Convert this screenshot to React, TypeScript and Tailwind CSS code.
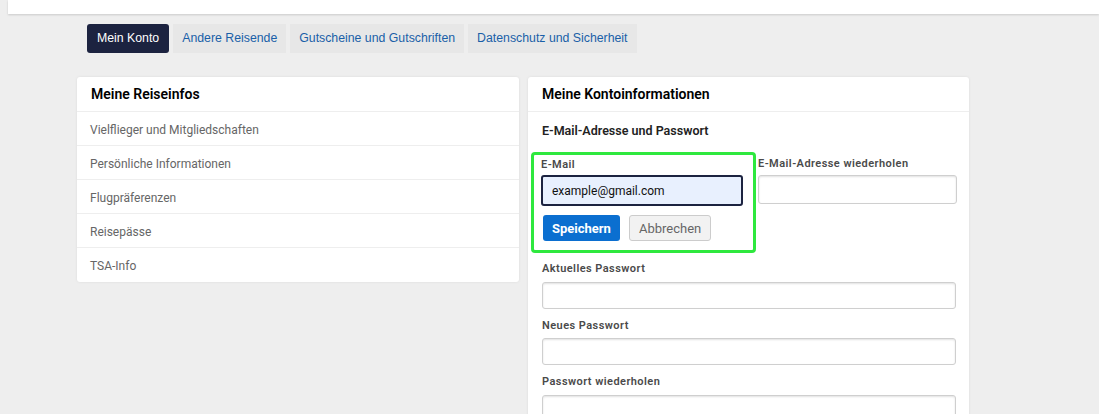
import { useState } from 'react'

const tabs = ['Mein Konto', 'Andere Reisende', 'Gutscheine und Gutschriften', 'Datenschutz und Sicherheit']

const travelLinks = [
    'Vielflieger und Mitgliedschaften',
    'Persönliche Informationen',
    'Flugpräferenzen',
    'Reisepässe',
    'TSA-Info',
]

const labelClass = 'block text-[11px] font-semibold tracking-[0.04em] text-[#4a4a4a]'

const inputClass =
    'block h-[27px] w-full rounded-[3px] border border-[#cfcfcf] bg-white shadow-[inset_0_1px_2px_rgba(0,0,0,0.12)] outline-none'

const Field = ({ label }: { label: string }) => (
    <div>
        <label className={labelClass + ' mb-[4px]'}>{label}</label>
        <input type="password" className={inputClass} />
    </div>
)

const App = () => {
    const [email, setEmail] = useState('example@gmail.com')

    return (
        <div className="min-h-[414px] bg-[#eeeeee] font-['Roboto',sans-serif]">
            <div className="ml-2 h-[14px] bg-white shadow-[0_1px_2px_rgba(0,0,0,0.15)]" />

            <div className="ml-[77px] w-[892px]">
                <nav className="ml-[10px] mt-[10px] flex gap-[4px] font-['Liberation_Sans',sans-serif] text-[12.3px]">
                    {tabs.map((tab, i) =>
                        i === 0 ? (
                            <button key={tab} className="h-[29px] rounded-[3px] bg-[#1c2340] px-[10px] text-white">
                                {tab}
                            </button>
                        ) : (
                            <button key={tab} className="h-[29px] bg-[#e7e7e7] px-[9px] text-[#1a5fa8]">
                                {tab}
                            </button>
                        )
                    )}
                </nav>

                <div className="mt-[24px] flex items-start gap-[9px]">
                    <section className="w-[442px] rounded-[3px] bg-white shadow-[0_0_3px_rgba(0,0,0,0.08)]">
                        <h2 className="flex h-[35px] items-center border-b border-[#eeeeee] px-[14px] text-[14px] font-semibold text-black">
                            Meine Reiseinfos
                        </h2>
                        <ul>
                            {travelLinks.map((link, i) => (
                                <li
                                    key={link}
                                    className={`flex h-[34px] items-center px-[13px] pt-[2px] text-[12px] text-[#666666] ${i < travelLinks.length - 1 ? 'border-b border-[#eeeeee]' : ''}`}
                                >
                                    {link}
                                </li>
                            ))}
                        </ul>
                    </section>

                    <section className="h-[340px] w-[441px] rounded-t-[3px] bg-white shadow-[0_0_3px_rgba(0,0,0,0.08)]">
                        <h2 className="flex h-[35px] items-center border-b border-[#eeeeee] px-[14px] text-[14px] font-semibold text-black">
                            Meine Kontoinformationen
                        </h2>
                        <div className="px-[14px] pt-[10px]">
                            <h3 className="text-[12.5px] font-semibold text-[#222222]">E-Mail-Adresse und Passwort</h3>

                            <div className="mt-[11px] grid grid-cols-[202px_199px] gap-x-[14px]">
                                <div className="-ml-[11px] -mr-[12px] rounded-[4px] border-[3px] border-[#2ee83e] px-[7px] pb-[9px] pt-[2px]">
                                    <label className={labelClass + ' mb-[2px]'}>E-Mail</label>
                                    <input
                                        value={email}
                                        onChange={(e) => setEmail(e.target.value)}
                                        className="block h-[31px] w-[202px] rounded-[3px] border-2 border-[#1c2340] bg-[#e8f0fe] px-[9px] text-[12px] text-[#111111] outline-none"
                                    />
                                    <div className="ml-[2px] mt-[9px] flex gap-[9px]">
                                        <button className="h-[26px] rounded-[3px] bg-[#0b6fd0] px-[9px] text-[13px] font-bold text-white">
                                            Speichern
                                        </button>
                                        <button className="h-[26px] rounded-[3px] border border-[#cccccc] bg-[#f2f2f2] px-[9px] text-[13px] text-[#666666]">
                                            Abbrechen
                                        </button>
                                    </div>
                                </div>
                                <div className="pt-[4px]">
                                    <label className={labelClass + ' mb-[3px]'}>E-Mail-Adresse wiederholen</label>
                                    <input type="email" className={inputClass + ' !h-[29px]'} />
                                </div>
                            </div>

                            <div className="mt-[8px] flex w-[414px] flex-col gap-[9px]">
                                <Field label="Aktuelles Passwort" />
                                <Field label="Neues Passwort" />
                                <Field label="Passwort wiederholen" />
                            </div>
                        </div>
                    </section>
                </div>
            </div>
        </div>
    )
}

export default App
